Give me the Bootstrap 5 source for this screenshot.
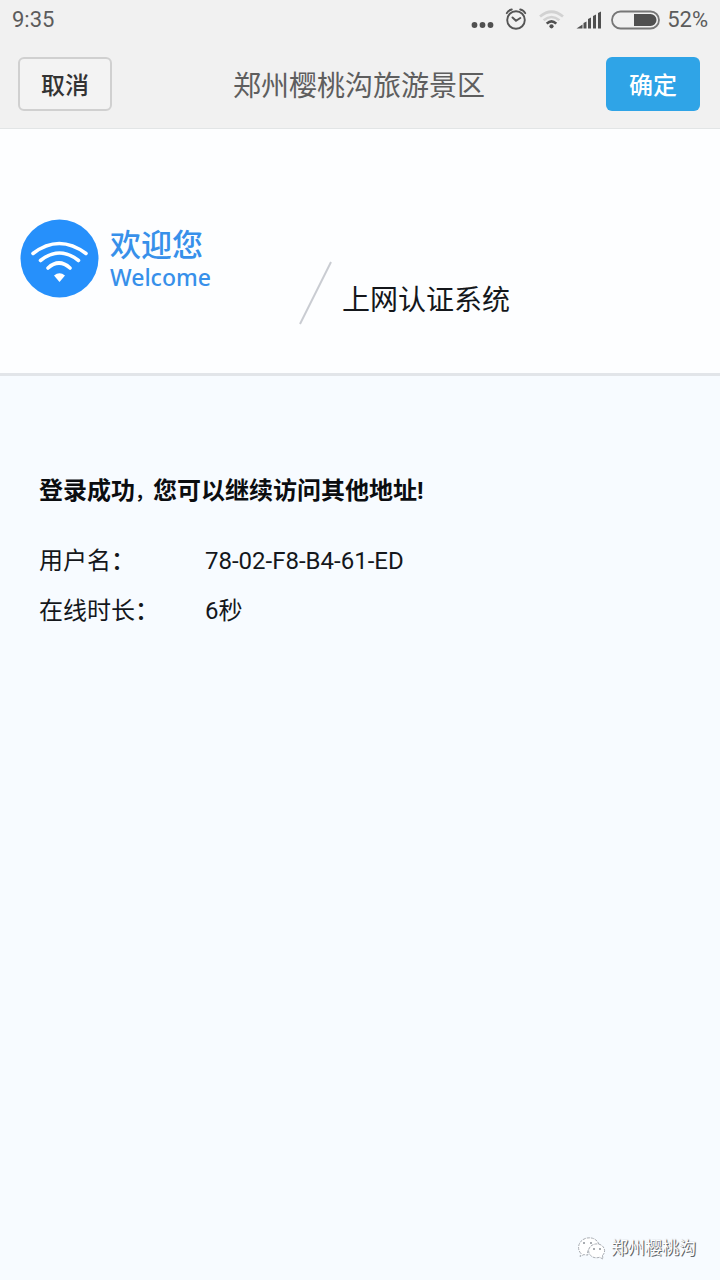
<!DOCTYPE html>
<html lang="zh-CN">
<head>
<meta charset="utf-8">
<meta name="viewport" content="width=device-width, initial-scale=1">
<title>上网认证系统</title>
<link rel="stylesheet" href="https://cdn.jsdelivr.net/npm/bootstrap@5.3.0/dist/css/bootstrap.min.css">
<style>
  body { font-family: Roboto, "Noto Sans CJK SC", sans-serif; font-size: 24px; line-height: 36px; color: #14171b; background: #f7fbff; }
  .top-area { background: #f1f1f1; border-bottom: 1px solid #e2e5e6; }
  .status-bar { height: 40px; padding: 0 12px; font-size: 22px; line-height: 40px; color: #5c5c5c; }
  .title-bar { height: 88px; padding: 0 20px 0 18px; }
  .page-title { padding-top: 5px; font-size: 28px; line-height: 40px; color: #5e5e5e; }
  .bar-btn { width: 94px; height: 54px; padding: 3px 0 0; font-size: 24px; font-weight: 500; border-radius: 6px; }
  .bar-btn-plain { color: #333; border: 2px solid #d0d0d0; background: #f3f3f3; }
  .bar-btn-main { color: #fff; border: 0; background: #2fa4e7; }
  .banner { height: 247px; padding: 88px 18px 0 18px; background: #fdfeff; border-bottom: 3px solid #e2e5e9; }
  .logo-text { width: 192px; padding: 11px 0 0 8px; color: #3790ea; }
  .logo-cn { font-size: 31px; line-height: 36px; font-weight: 500; }
  .logo-en { font-family: "Noto Sans", sans-serif; font-size: 23px; line-height: 26px; font-weight: 500; }
  .system-name { padding-top: 64px; margin-left: 8px; font-size: 28px; line-height: 40px; }
  .slash { margin-top: 43px; }
  .content-area { padding: 97px 38px 0 39px; }
  .result-title { font-size: 24px; line-height: 36px; margin-bottom: 32px; color: #0b0d10; }
  .punct { font-size: 18px; }
  .info-punct { font-family: "Noto Sans CJK SC", sans-serif; font-size: 24px; line-height: 24px; font-weight: 500; }
  .info-row { height: 36px; margin-bottom: 14px; }
  .info-label { width: 166px; font-weight: 400; }
  .info-value { font-weight: 400; }
  .account-mark { padding: 0 24px 14px; font-size: 17px; line-height: 36px; color: #fff; text-shadow: 1px 1px 0 #60656b, 1px 0 1px #8d9298; }
</style>
</head>
<body class="d-flex flex-column min-vh-100">
<header class="top-area">
  <div class="status-bar d-flex justify-content-between align-items-center">
    <span>9:35</span>
    <div class="d-flex align-items-center">
      <svg width="201" height="30" viewBox="466 4 201 30" role="img" aria-label="状态" fill="none">
        <g fill="#505050"><circle cx="474.500" cy="24" r="2.900"/><circle cx="482.500" cy="24" r="2.900"/><circle cx="490.500" cy="24" r="2.900"/></g>
        <g stroke="#555" stroke-width="1.900" stroke-linecap="round">
          <circle cx="516" cy="19" r="8.800"/>
          <path d="M512.500 16.500l3.500 3.300 4.300-2.800M506.800 12.200q1.500-3 5-3.700M525.200 12.200q-1.500-3-5-3.700"/>
        </g>
        <path d="M540 15.500q11.500-9.500 23 0" stroke="#d2d2d2" stroke-width="2.800"/>
        <path d="M543.600 19.300q8-6.600 15.800 0" stroke="#d2d2d2" stroke-width="2.600"/>
        <path d="M546.700 22.600q4.800-4.400 9.600 0" stroke="#505050" stroke-width="2.600"/>
        <circle cx="551.500" cy="25.300" r="2.100" fill="#505050"/>
        <path d="M576.500 27.500l6-4v4zM583.500 22l3-1.500v7h-3zM588 18l3-1.500v11h-3zM593 15l3-1.500v14h-3zM598 12l3-1.500v17h-3z" fill="#505050"/>
        <rect x="612" y="10.500" width="47" height="17" rx="8.500" stroke="#777" stroke-width="1.800"/>
        <path d="M634 13h16.500a6 6 0 0 1 0 12H634z" fill="#505050"/>
      </svg>
      <span>52%</span>
    </div>
  </div>
  <div class="title-bar d-flex justify-content-between align-items-center">
    <button type="button" class="btn bar-btn bar-btn-plain">取消</button>
    <h1 class="page-title fw-normal m-0">郑州樱桃沟旅游景区</h1>
    <button type="button" class="btn bar-btn bar-btn-main">确定</button>
  </div>
</header>
<section class="banner d-flex align-items-start">
  <svg class="flex-shrink-0" width="84" height="84" viewBox="18 217 84 84" role="img" aria-label="Wi-Fi" fill="none">
    <circle cx="59.500" cy="258.500" r="39" fill="#2690fb"/>
    <g stroke="#fff" stroke-width="3.600" stroke-linecap="round">
      <path d="M33 253.500q26-20 53 0M40.500 260.500q19-15 38 0M48 268q11-10 22 0"/>
    </g>
    <path d="M54 275.500q5.500-4.500 11 0l-5.500 6.500z" fill="#fff"/>
  </svg>
  <div class="logo-text flex-shrink-0">
    <div class="logo-cn">欢迎您</div>
    <div class="logo-en">Welcome</div>
  </div>
  <svg class="slash flex-shrink-0" width="40" height="66" viewBox="294 260 40 66" aria-hidden="true"><path d="M331 262L300 324" stroke="#c9ccd2" stroke-width="2"/></svg>
  <h2 class="system-name fw-normal mb-0">上网认证系统</h2>
</section>
<main class="content-area flex-grow-1">
  <h3 class="result-title fw-bold">登录成功<span class="punct">，</span>您可以继续访问其他地址!</h3>
  <dl class="m-0">
    <div class="info-row d-flex"><dt class="info-label">用户名<span class="info-punct">：</span></dt><dd class="info-value m-0">78-02-F8-B4-61-ED</dd></div>
    <div class="info-row d-flex"><dt class="info-label">在线时长<span class="info-punct">：</span></dt><dd class="info-value m-0">6秒</dd></div>
  </dl>
</main>
<footer class="account-mark d-flex justify-content-end align-items-center gap-1">
  <svg width="30" height="26" viewBox="576 1236 30 26" aria-hidden="true" fill="#fff" stroke="#a9adb3" stroke-width="1" stroke-dasharray="3 1">
    <path d="M580 1254.500c-5-5-2-14 6-15.500 6-1 11 2 12 7-8 0-13 5-11 10-2 0-3 0-4-.500l-4 2z"/>
    <path d="M601.500 1256.500c4-4 2-10-4-11.500-7-1-12 5-9 10 2 3.500 6 4.500 10 3.300l3.500 1.700z"/>
    <g fill="#8d9298" stroke="none"><circle cx="583" cy="1244" r="1"/><circle cx="590" cy="1244" r="1"/><circle cx="593" cy="1250" r="1"/><circle cx="599" cy="1250" r="1"/></g>
  </svg>
  <span>郑州樱桃沟</span>
</footer>
<script src="https://cdn.jsdelivr.net/npm/bootstrap@5.3.0/dist/js/bootstrap.bundle.min.js"></script>
</body>
</html>
